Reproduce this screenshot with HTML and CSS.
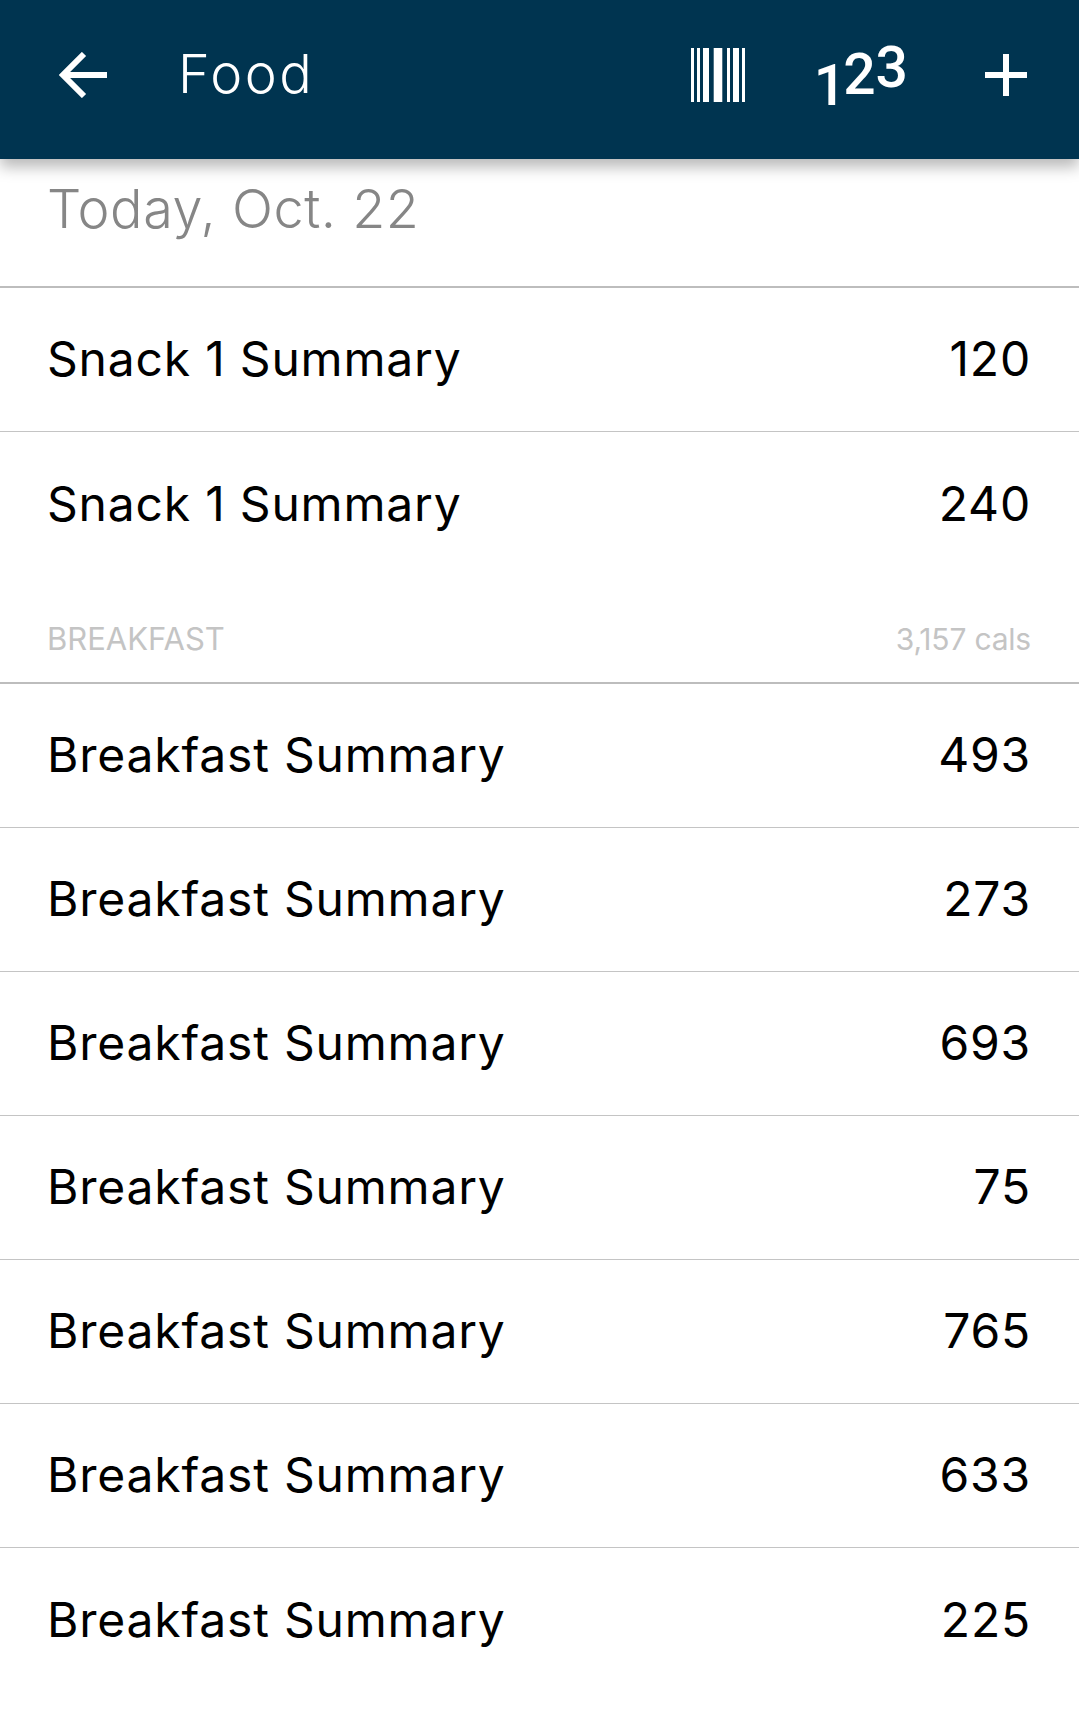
FILE: index.html
```html
<!DOCTYPE html>
<html lang="en">
<head>
<meta charset="utf-8">
<title>Food</title>
<link rel="stylesheet" href="styles.css">
</head>
<body>
<header class="topbar">
  <svg class="icon-back" width="48" height="46" viewBox="0 0 48 46" aria-hidden="true">
    <path d="M48 23H4M25 2L4 23L25 44" fill="none" stroke="#fff" stroke-width="6"/>
  </svg>
  <h1 class="title">Food</h1>
  <div class="actions">
    <svg class="icon-barcode" width="54" height="54" viewBox="0 0 54 54" aria-hidden="true">
      <g fill="#fff">
        <rect x="0" width="3" height="54"/><rect x="6" width="3" height="54"/><rect x="12" width="6" height="54"/>
        <rect x="22.700" width="8.600" height="54"/><rect x="36" width="3" height="54"/><rect x="42" width="6" height="54"/><rect x="51" width="3" height="54"/>
      </g>
    </svg>
    <div class="digits"><span class="d1">1</span><span class="d2">2</span><span class="d3">3</span></div>
    <svg class="icon-plus" width="42" height="42" viewBox="0 0 42 42" aria-hidden="true">
      <path d="M0 21H42M21 0V42" fill="none" stroke="#fff" stroke-width="6"/>
    </svg>
  </div>
</header>
<main>
  <div class="date">Today, Oct. 22</div>
  <ul class="list">
    <li class="row"><span>Snack 1 Summary</span><span>120</span></li>
    <li class="row"><span>Snack 1 Summary</span><span>240</span></li>
  </ul>
  <div class="section"><span class="section-name">BREAKFAST</span><span class="section-cals">3,157 cals</span></div>
  <ul class="list">
    <li class="row"><span>Breakfast Summary</span><span>493</span></li>
    <li class="row"><span>Breakfast Summary</span><span>273</span></li>
    <li class="row"><span>Breakfast Summary</span><span>693</span></li>
    <li class="row"><span>Breakfast Summary</span><span>75</span></li>
    <li class="row"><span>Breakfast Summary</span><span>765</span></li>
    <li class="row"><span>Breakfast Summary</span><span>633</span></li>
    <li class="row"><span>Breakfast Summary</span><span>225</span></li>
  </ul>
</main>
</body>
</html>
```
FILE: styles.css
```css
* { box-sizing: border-box; }
html, body { margin: 0; padding: 0; }
body { width: 1079px; height: 1710px; overflow: hidden; background: #fff; font-family: "Inter", "Liberation Sans", sans-serif; color: #000; }
.topbar { position: relative; z-index: 2; height: 159px; background: #003450; display: flex; align-items: flex-start; box-shadow: 0 8px 14px rgba(0,0,0,.28); color: #fff; }
.icon-back { margin: 52px 0 0 59px; flex: none; }
.title { margin: 40px 0 0 71px; font-size: 54px; line-height: 68px; font-weight: 300; letter-spacing: 2.500px; }
.actions { margin-left: auto; display: flex; align-items: flex-start; padding-right: 52px; }
.icon-barcode { margin-top: 48px; flex: none; }
.digits { margin-left: 69px; display: flex; align-items: flex-start; font-family: "Roboto", sans-serif; font-weight: 500; font-size: 57px; line-height: 44px; }
.d1 { margin: 64px -3px 0 0; }
.d2 { margin-top: 53px; }
.d3 { margin-top: 46px; }
.icon-plus { margin: 54px 0 0 77px; flex: none; }
.date { height: 129px; border-bottom: 2px solid #bdbdbd; padding: 16px 47px 0; font-size: 54px; line-height: 68px; font-weight: 300; letter-spacing: .5px; color: #868686; }
.list { list-style: none; margin: 0; padding: 0; }
.row { height: 144px; padding: 0 48px 2px 47px; display: flex; justify-content: space-between; align-items: center; font-size: 48px; letter-spacing: .8px; border-bottom: 1px solid #c4c4c4; }
.row:last-child { border-bottom: 0; }
.section { height: 108px; border-bottom: 2px solid #bdbdbd; padding: 39px 48px 0 47px; display: flex; justify-content: space-between; font-size: 31px; line-height: 48px; color: #c4c4c4; }
.section-cals { font-size: 30px; letter-spacing: -.2px; }
```
